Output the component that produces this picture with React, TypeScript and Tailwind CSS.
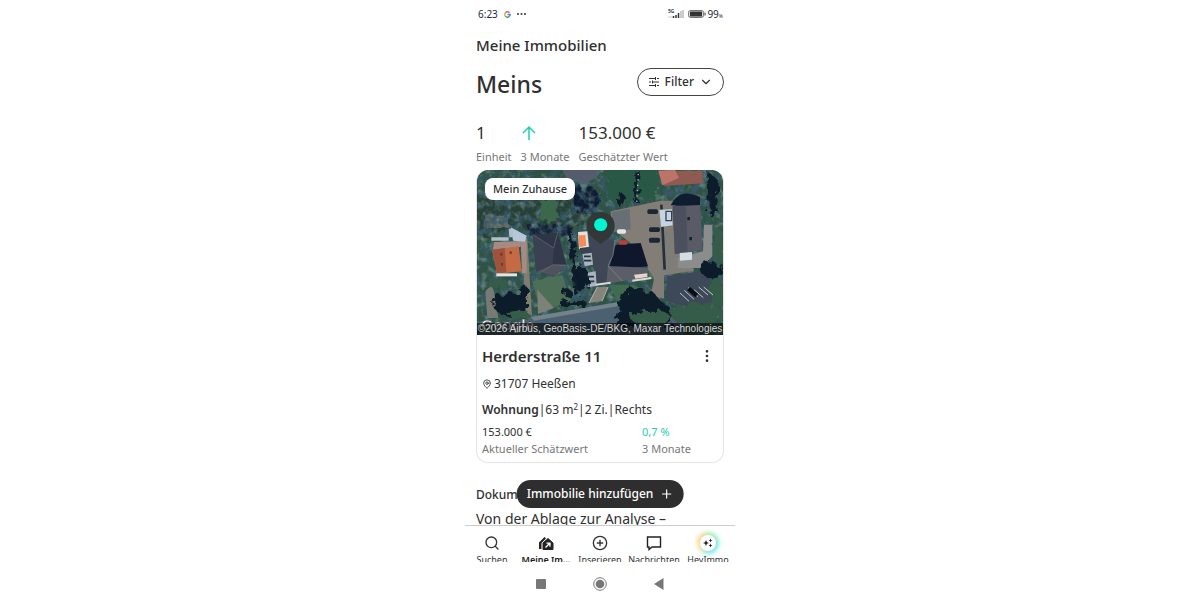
import { ChevronDown, CirclePlus, MapPin, MoreVertical, Plus, Search } from "lucide-react";
import type { ReactNode } from "react";

const StatusBar = () => (
  <div className="flex h-7 shrink-0 items-center justify-between px-3 text-[10px] text-gray-800">
    <div className="flex items-center gap-[6px] pl-px">
      <span>6:23</span>
      <svg viewBox="0 0 24 24" className="h-[7px] w-[7px]" fill="none" strokeWidth="5">
        <path d="M19 6A9 9 0 0 0 5 6" stroke="#d9695c" />
        <path d="M5 6a9 9 0 0 0 0 12" stroke="#e0b045" />
        <path d="M5 18a9 9 0 0 0 13 1" stroke="#51a06a" />
        <path d="M12 12h9a9 9 0 0 1-3 7" stroke="#4f83cf" />
      </svg>
      <svg viewBox="0 0 9 2" className="h-[2px] w-[9px]" fill="#333">
        <circle cx="1" cy="1" r="1" />
        <circle cx="4.5" cy="1" r="1" />
        <circle cx="8" cy="1" r="1" />
      </svg>
    </div>
    <div className="flex items-center gap-1">
      <svg viewBox="0 0 17 10" className="h-[10px] w-[17px]">
        <text x="1" y="4" fontSize="5" fontWeight="700" fill="#444">5G</text>
        <path d="M1 8h4" stroke="#ccc" />
        <path d="M6.5 9V7M9 9V6M11.5 9V4" stroke="#333" strokeWidth="1.5" />
        <path d="M14 9V2M16 9V1" stroke="#bbb" strokeWidth="1.5" />
      </svg>
      <div className="flex items-center gap-px">
        <svg viewBox="0 0 18 8" className="h-2 w-[18px]">
          <rect x="0.5" y="0.5" width="15" height="7" rx="2" fill="#ddd" stroke="#777" />
          <rect x="2" y="1.5" width="12" height="5" rx="0.5" fill="#333" />
          <path d="M17 2.5v3" stroke="#777" strokeWidth="1.5" />
        </svg>
        <span>
          99<span className="text-[5px]">%</span>
        </span>
      </div>
    </div>
  </div>
);

const AerialMap = () => (
  <svg viewBox="6 6 744 495" preserveAspectRatio="xMidYMid slice" className="block h-[165px] w-full" role="img" aria-label="Luftbild">
    <defs>
      <filter id="rough" x="-10%" y="-10%" width="120%" height="120%">
        <feTurbulence type="fractalNoise" baseFrequency="0.05" numOctaves="3" seed="4" />
        <feDisplacementMap in="SourceGraphic" scale="34" />
      </filter>
      <filter id="grain" x="0" y="0" width="100%" height="100%">
        <feTurbulence type="fractalNoise" baseFrequency="0.035" numOctaves="4" seed="9" />
        <feColorMatrix values="0 0 0 0 0.04  0 0 0 0 0.1  0 0 0 0 0.14  3.6 0 0 0 -1.6" />
      </filter>
      <filter id="light" x="0" y="0" width="100%" height="100%">
        <feTurbulence type="fractalNoise" baseFrequency="0.05" numOctaves="3" seed="21" />
        <feColorMatrix values="0 0 0 0 0.4  0 0 0 0 0.52  0 0 0 0 0.46  0 2.8 0 0 -1.4" />
      </filter>
    </defs>
    <rect width="760" height="510" fill="#2e5346" />
    <g filter="url(#rough)">
      <path d="M0 90h330v90H160L0 210z" fill="#263f38" />
      <path d="M300 60q60-30 80 40l-20 40-60-10z" fill="#111f33" />
      <path d="M160 170h130v30H160z" fill="#13213a" />
      <path d="M30 140h75v40H30z" fill="#59645f" />
    </g>
    <rect width="760" height="510" filter="url(#grain)" />
    <rect width="760" height="510" filter="url(#light)" opacity="0.45" />
    <g filter="url(#rough)">
      <path d="M400 0h155l-5 85-125 25-25-20z" fill="#2a5946" />
      <path d="M200 95h50v65h-50z" fill="#3a674b" />
    </g>

    {/* roads and paved yards */}
    <path d="M0 505 170 447l260-44 200 20v82z" fill="#4b6070" />
    <path d="M170 447 430 403v12L180 458z" fill="#74828a" />
    <path d="M410 130 560 98h40l60 210-90 14v70l-40-10 10-50-50-90-80-65z" fill="#827e77" />
    <path d="M412 132l55-10 3 62-52 8z" fill="#676f75" />
    <path d="M558 180h42l8 130-45 5z" fill="#7f7d77" />
    <path d="M562 110l10 195" stroke="#26303a" strokeWidth="8" />
    <path d="M34 370q24-30 27 10l12 70H40z" fill="#787b74" />
    <path d="M142 210h18l14 235h-17z" fill="#807e73" />
    <path d="M175 340l90-20 25 80-90 30z" fill="#4d6f57" />
    <path d="M190 365l50 55-48 18z" fill="#7d8177" />
    <path d="M345 405l25-48h32l-18 42z" fill="#85847a" />
    <path d="M405 350h75l60 35-110 15z" fill="#3f6b50" />
    <path d="M345 405l25-48M384 400l18-43" stroke="#b5b5aa" strokeWidth="3" />
    <path d="M580 325l110-17 55 100-135 5-35-20z" fill="#3d4858" />
    <path d="M690 170h25v95l-35 35h-68v-30l75-20z" fill="#8b8d8d" />

    {/* roofs */}
    <path d="M265 6h105v22l-42 20-50-15z" fill="#545d6e" />
    <path d="M553 8h133v38l-115 8z" fill="#8f5a52" />
    <path d="M553 8l50-2 12 24-50 22z" fill="#bd7468" />
    <path d="M60 222l80-3v18l-84 8zM140 220h18v95h-14z" fill="#a58c82" />
    <path d="M54 245l80-10 9 75-73 8z" fill="#c46a45" />
    <path d="M54 245l38-5 5 73-27 5z" fill="#a0533b" />
    <path d="M82 255v8M84 285v8M110 250v8" stroke="#703828" strokeWidth="6" />
    <path d="M67 316h62v9H67z" fill="#e0e4e4" />
    <path d="M110 178l48 25-5 18-36-3z" fill="#b6c8d8" />
    <path d="M52 208h52v10H52zM104 182h12v26h-10z" fill="#b3bfc9" />
    <path d="M177 200l75-6 25 95-35 35-55-14z" fill="#2e3547" />
    <path d="M177 200l62 40-3 50-50 20z" fill="#3b4152" />
    <path d="M187 310l50-20 40-1-35 35z" fill="#50535d" />
    <path d="M177 200l62 40 12-46M237 290l-45 28M237 290l40 3" stroke="#6a6f78" strokeWidth="2" fill="none" />
    <path d="M312 192l28-2 5 48-30 6z" fill="#e9e0da" />
    <path d="M314 202l20-1 3 32-21 5z" fill="#f38d5c" />
    <path d="M317 240l34-4 10 38-30 6z" fill="#384251" />
    <path d="M345 210l75 5 10 80-30 55h-32z" fill="#3f4655" />
    <path d="M425 230l75-5 22 70-118 12z" fill="#0e172b" />
    <path d="M402 294l120 5v28l-125 20z" fill="#5b5e66" />
    <path d="M402 294l15-33 6-45M402 294l43 45" stroke="#8a9097" strokeWidth="2" fill="none" />
    <path d="M325 258l28-4 4 36-25 5zM337 315l28-5 3 44-25 3z" fill="#a9b6be" />
    <path d="M330 265h20M330 278h22M342 326h18M345 340h16" stroke="#283340" strokeWidth="5" />
    <path d="M365 350l45-6M475 338l57-8" stroke="#d9dad4" strokeWidth="6" />
    <path d="M480 320l40-4v11l-36 5z" fill="#e4d4cb" />
    <path d="M590 112q25-55 88-25v30z" fill="#101d30" />
    <path d="M596 115l82-4 8 135-84 12z" fill="#595c67" />
    <path d="M596 115l40-2 5 142-38 3z" fill="#4c505e" />
    <path d="M556 125l38-1 2 48-35 5z" fill="#c5d4e0" />
    <path d="M576 130h17v28h-17z" fill="none" stroke="#344353" strokeWidth="4" />
    <path d="M617 255l37-3v23l-36 3z" fill="#d2dde5" />
    <path d="M644 147v10M650 207v10" stroke="#1c222d" strokeWidth="8" />

    {/* trees and their shadows */}
    <g filter="url(#rough)" fill="#0e1a2b">
      <path d="M440 380q10-10 20-5l10-20 15 12 20-8 10 18 25-2 20 25 30 20 5 50H425z" />
      <ellipse cx="110" cy="410" rx="52" ry="34" />
      <ellipse cx="325" cy="335" rx="20" ry="40" />
      <path d="M285 180h10l20 200h-14z" />
      <ellipse cx="715" cy="305" rx="36" ry="26" />
      <ellipse cx="150" cy="370" rx="12" ry="20" />
      <path d="M255 400h80v12h-80zM485 8h12l-5 95h-12zM700 10l35 30-15 110-15-10z" />
      <ellipse cx="440" cy="95" rx="14" ry="20" />
      <ellipse cx="280" cy="375" rx="16" ry="11" />
    </g>
    <g filter="url(#rough)" fill="#355c4a">
      <ellipse cx="530" cy="450" rx="60" ry="22" />
      <ellipse cx="670" cy="440" rx="80" ry="32" />
      <ellipse cx="730" cy="375" rx="22" ry="45" />
      <ellipse cx="735" cy="240" rx="16" ry="60" />
      <ellipse cx="75" cy="345" rx="30" ry="16" />
      <ellipse cx="135" cy="440" rx="35" ry="12" />
    </g>
    <path d="M493 18l-5 90" stroke="#aeb4b2" strokeWidth="4" strokeDasharray="4 12" />

    {/* parked cars and bays */}
    <g fill="#1d2631">
      <rect x="520" y="124" width="32" height="14" rx="5" />
      <rect x="525" y="178" width="33" height="14" rx="5" />
      <rect x="525" y="209" width="33" height="15" rx="5" />
    </g>
    <rect x="429" y="184" width="27" height="13" rx="5" fill="#e2e6e7" />
    <rect x="433" y="217" width="28" height="13" rx="5" fill="#b5403d" />
    <path d="M618 375l27 25M631 367l29 27M643 359l29 27M660 365l28 24M674 357l28 24M689 357l28 24" stroke="#bcc7cc" strokeWidth="3" />
    <path d="M644 362l24 21" stroke="#080d15" strokeWidth="13" />

    <text x="22" y="486" fontFamily="Liberation Sans, sans-serif" fontSize="46" fontWeight="700" fill="#f0f3f2" stroke="#1c2529" strokeWidth="1">Google</text>

    {/* location pin */}
    <path d="M380 132c24 0 42 17 42 40 0 20-10 34-25 43l-17 13-17-13c-15-9-25-23-25-43 0-23 18-40 42-40z" fill="#343737" />
    <ellipse cx="380" cy="170" rx="20" ry="19" fill="#00f5d0" />
  </svg>
);

const HouseIcon = () => (
  <svg viewBox="0 0 16 16" className="h-4 w-4" fill="none">
    <path d="M1 14V7.5L6.5 2 8 3.500 3.500 8v6z" fill="#222" />
    <path d="M5 14.500V8l5-4.500L15 8v6.500z" fill="#222" stroke="#222" strokeLinejoin="round" />
    <path d="M7.500 12.500l4-4M8.500 8.200H12v3.500" stroke="#fff" strokeWidth="1.300" />
  </svg>
);

const SparkleIcon = () => (
  <span className="relative flex h-[22px] w-[22px] items-center justify-center">
    <span className="absolute inset-0 rounded-full bg-[conic-gradient(#b5edb0,#6fe8e0_30%,#7aeaf0_50%,#ffe09a_68%,#ffcf80_85%,#b5edb0)] blur-[2px]" />
    <svg viewBox="0 0 18 18" className="relative h-[18px] w-[18px]">
      <circle cx="9" cy="9" r="8" fill="#fff" />
      <path d="M7 6l1 2.200L10 9l-2 .8L7 12l-1-2.200L4 9l2-.8zM11.500 4.500l.6 1.400 1.400.6-1.400.6-.6 1.400-.6-1.400-1.400-.6 1.400-.6zM11.500 9.500l.6 1.400 1.400.6-1.400.6-.6 1.400-.6-1.400-1.400-.6 1.400-.6z" fill="#222" />
    </svg>
  </span>
);

const tabs: { label: string; icon: ReactNode; active?: boolean }[] = [
  { label: "Suchen", icon: <Search className="h-4 w-4" strokeWidth={2} /> },
  { label: "Meine Im...", icon: <HouseIcon />, active: true },
  { label: "Inserieren", icon: <CirclePlus className="h-4 w-4" strokeWidth={2} /> },
  {
    label: "Nachrichten",
    icon: (
      <svg viewBox="0 0 16 16" className="h-4 w-4" fill="none" stroke="#222" strokeWidth="1.4">
        <path d="M1.500 2h13v10H6l-3 2.500V12H1.500z" />
      </svg>
    ),
  },
  { label: "HeyImmo", icon: <SparkleIcon /> },
];

const App = () => {
  return (
    <div className="h-screen min-h-[500px] bg-white font-['Noto_Sans',sans-serif] text-[#303030]">
      <div className="mx-auto flex h-full w-full max-w-[270px] flex-col">
        <StatusBar />

        <main className="relative min-h-0 flex-1 overflow-hidden px-[11px]">
          <header className="flex h-[34px] items-center text-[15px] font-medium">Meine Immobilien</header>

          <div className="flex h-10 items-center justify-between">
            <h1 className="pt-1 text-[23px] font-medium">Meins</h1>
            <button className="flex h-7 items-center gap-[5px] rounded-full border border-[#444] px-[10px] text-[12px] font-medium">
              <svg viewBox="0 0 12 12" className="h-3 w-3" fill="none" stroke="currentColor">
                <path d="M1 2.500h6M9 2.500h2M1 6h2M5 6h6M1 9.500h6M9 9.500h2M7.500 1v3M4.500 4.500v3M7.500 8v3" />
              </svg>
              Filter
              <ChevronDown className="h-[14px] w-[14px]" />
            </button>
          </div>

          <dl className="flex h-[68px] items-end gap-[9px] pb-[5px] text-[11px] leading-4 text-[#777]">
            <div className="flex flex-col-reverse gap-[2px]">
              <dt>Einheit</dt>
              <dd className="text-[17px] leading-7 text-[#303030]">1</dd>
            </div>
            <div className="flex flex-col-reverse gap-[2px]">
              <dt>3 Monate</dt>
              <dd className="flex h-7 items-center">
                <svg viewBox="0 0 16 16" className="h-4 w-4" fill="none" stroke="#1fcfae" strokeWidth="1.5">
                  <path d="M8 15V2M2 8l6-6 6 6" />
                </svg>
              </dd>
            </div>
            <div className="flex flex-col-reverse gap-[2px]">
              <dt>Geschätzter Wert</dt>
              <dd className="text-[17px] leading-7 text-[#303030]">153.000 €</dd>
            </div>
          </dl>

          <article className="overflow-hidden rounded-xl border border-t-0 border-[#e5e5e5]">
            <div className="relative">
              <AerialMap />
              <span className="absolute top-2 left-2 flex h-[22px] items-center rounded-lg bg-white px-2 text-[11px] font-medium">
                Mein Zuhause
              </span>
              <p className="absolute inset-x-0 bottom-0 bg-black/60 text-center font-['Liberation_Sans',sans-serif] text-[10px] leading-3 whitespace-nowrap text-[#d5d5d5]">
                ©2026 Airbus, GeoBasis-DE/BKG, Maxar Technologies
              </p>
            </div>
            <div className="px-[5px] pt-[7px] pb-[5px]">
              <div className="flex h-7 items-center justify-between pr-[3px]">
                <h2 className="text-[15px] font-semibold">Herderstraße 11</h2>
                <button aria-label="Mehr">
                  <MoreVertical className="h-4 w-4" />
                </button>
              </div>
              <p className="flex h-7 items-center gap-[2px] text-[12px]">
                <MapPin className="h-[10px] w-[10px]" />
                31707 Heeßen
              </p>
              <p className="flex h-6 items-center text-[12px] whitespace-pre">
                <span>
                  <b className="font-semibold">Wohnung</b>|63 m<sup className="text-[8px]">2</sup>|2 Zi.|Rechts
                </span>
              </p>
              <dl className="grid grid-cols-[160px_1fr] pt-px text-[11px] leading-[17px] text-[#777]">
                <div className="flex flex-col-reverse">
                  <dt>Aktueller Schätzwert</dt>
                  <dd className="text-[#303030]">153.000 €</dd>
                </div>
                <div className="flex flex-col-reverse">
                  <dt>3 Monate</dt>
                  <dd className="text-[#25cfb0]">0,7 %</dd>
                </div>
              </dl>
            </div>
          </article>

          <section className="pt-5">
            <h3 className="text-[12px] leading-6 font-medium">Dokumente</h3>
            <p className="text-[14px] leading-6 whitespace-nowrap">Von der Ablage zur Analyse –</p>
          </section>

          <button className="absolute bottom-[17px] left-1/2 flex h-7 -translate-x-1/2 items-center gap-[6px] rounded-full bg-[#2e2e2e] px-[10px] text-[12px] font-medium whitespace-nowrap text-white">
            Immobilie hinzufügen
            <Plus className="h-[14px] w-[14px]" />
          </button>
        </main>

        <nav className="grid h-[37px] shrink-0 grid-cols-5 overflow-hidden border-t border-[#ccc]">
          {tabs.map((tab) => (
            <a
              key={tab.label}
              href="#"
              className={tab.active ? "flex flex-col items-center text-[9px] font-semibold text-[#222]" : "flex flex-col items-center text-[9px] text-[#333]"}
            >
              <span className="flex h-[34px] shrink-0 items-center">{tab.icon}</span>
              <span className="-mt-[6px] leading-3 whitespace-nowrap">{tab.label}</span>
            </a>
          ))}
        </nav>

        <div className="flex h-[38px] shrink-0 items-center justify-center gap-[46px] pt-[6px]">
          <button aria-label="Übersicht">
            <svg viewBox="0 0 12 12" className="h-3 w-3">
              <rect x="1" y="1" width="10" height="10" rx="1" fill="#777" />
            </svg>
          </button>
          <button aria-label="Start">
            <svg viewBox="0 0 14 14" className="h-[14px] w-[14px]">
              <circle cx="7" cy="7" r="6.300" fill="none" stroke="#777" />
              <circle cx="7" cy="7" r="4.300" fill="#777" />
            </svg>
          </button>
          <button aria-label="Zurück">
            <svg viewBox="0 0 12 12" className="h-3 w-3">
              <path d="M10.500 0v12L1 6z" fill="#777" />
            </svg>
          </button>
        </div>
      </div>
    </div>
  );
};

export default App;
